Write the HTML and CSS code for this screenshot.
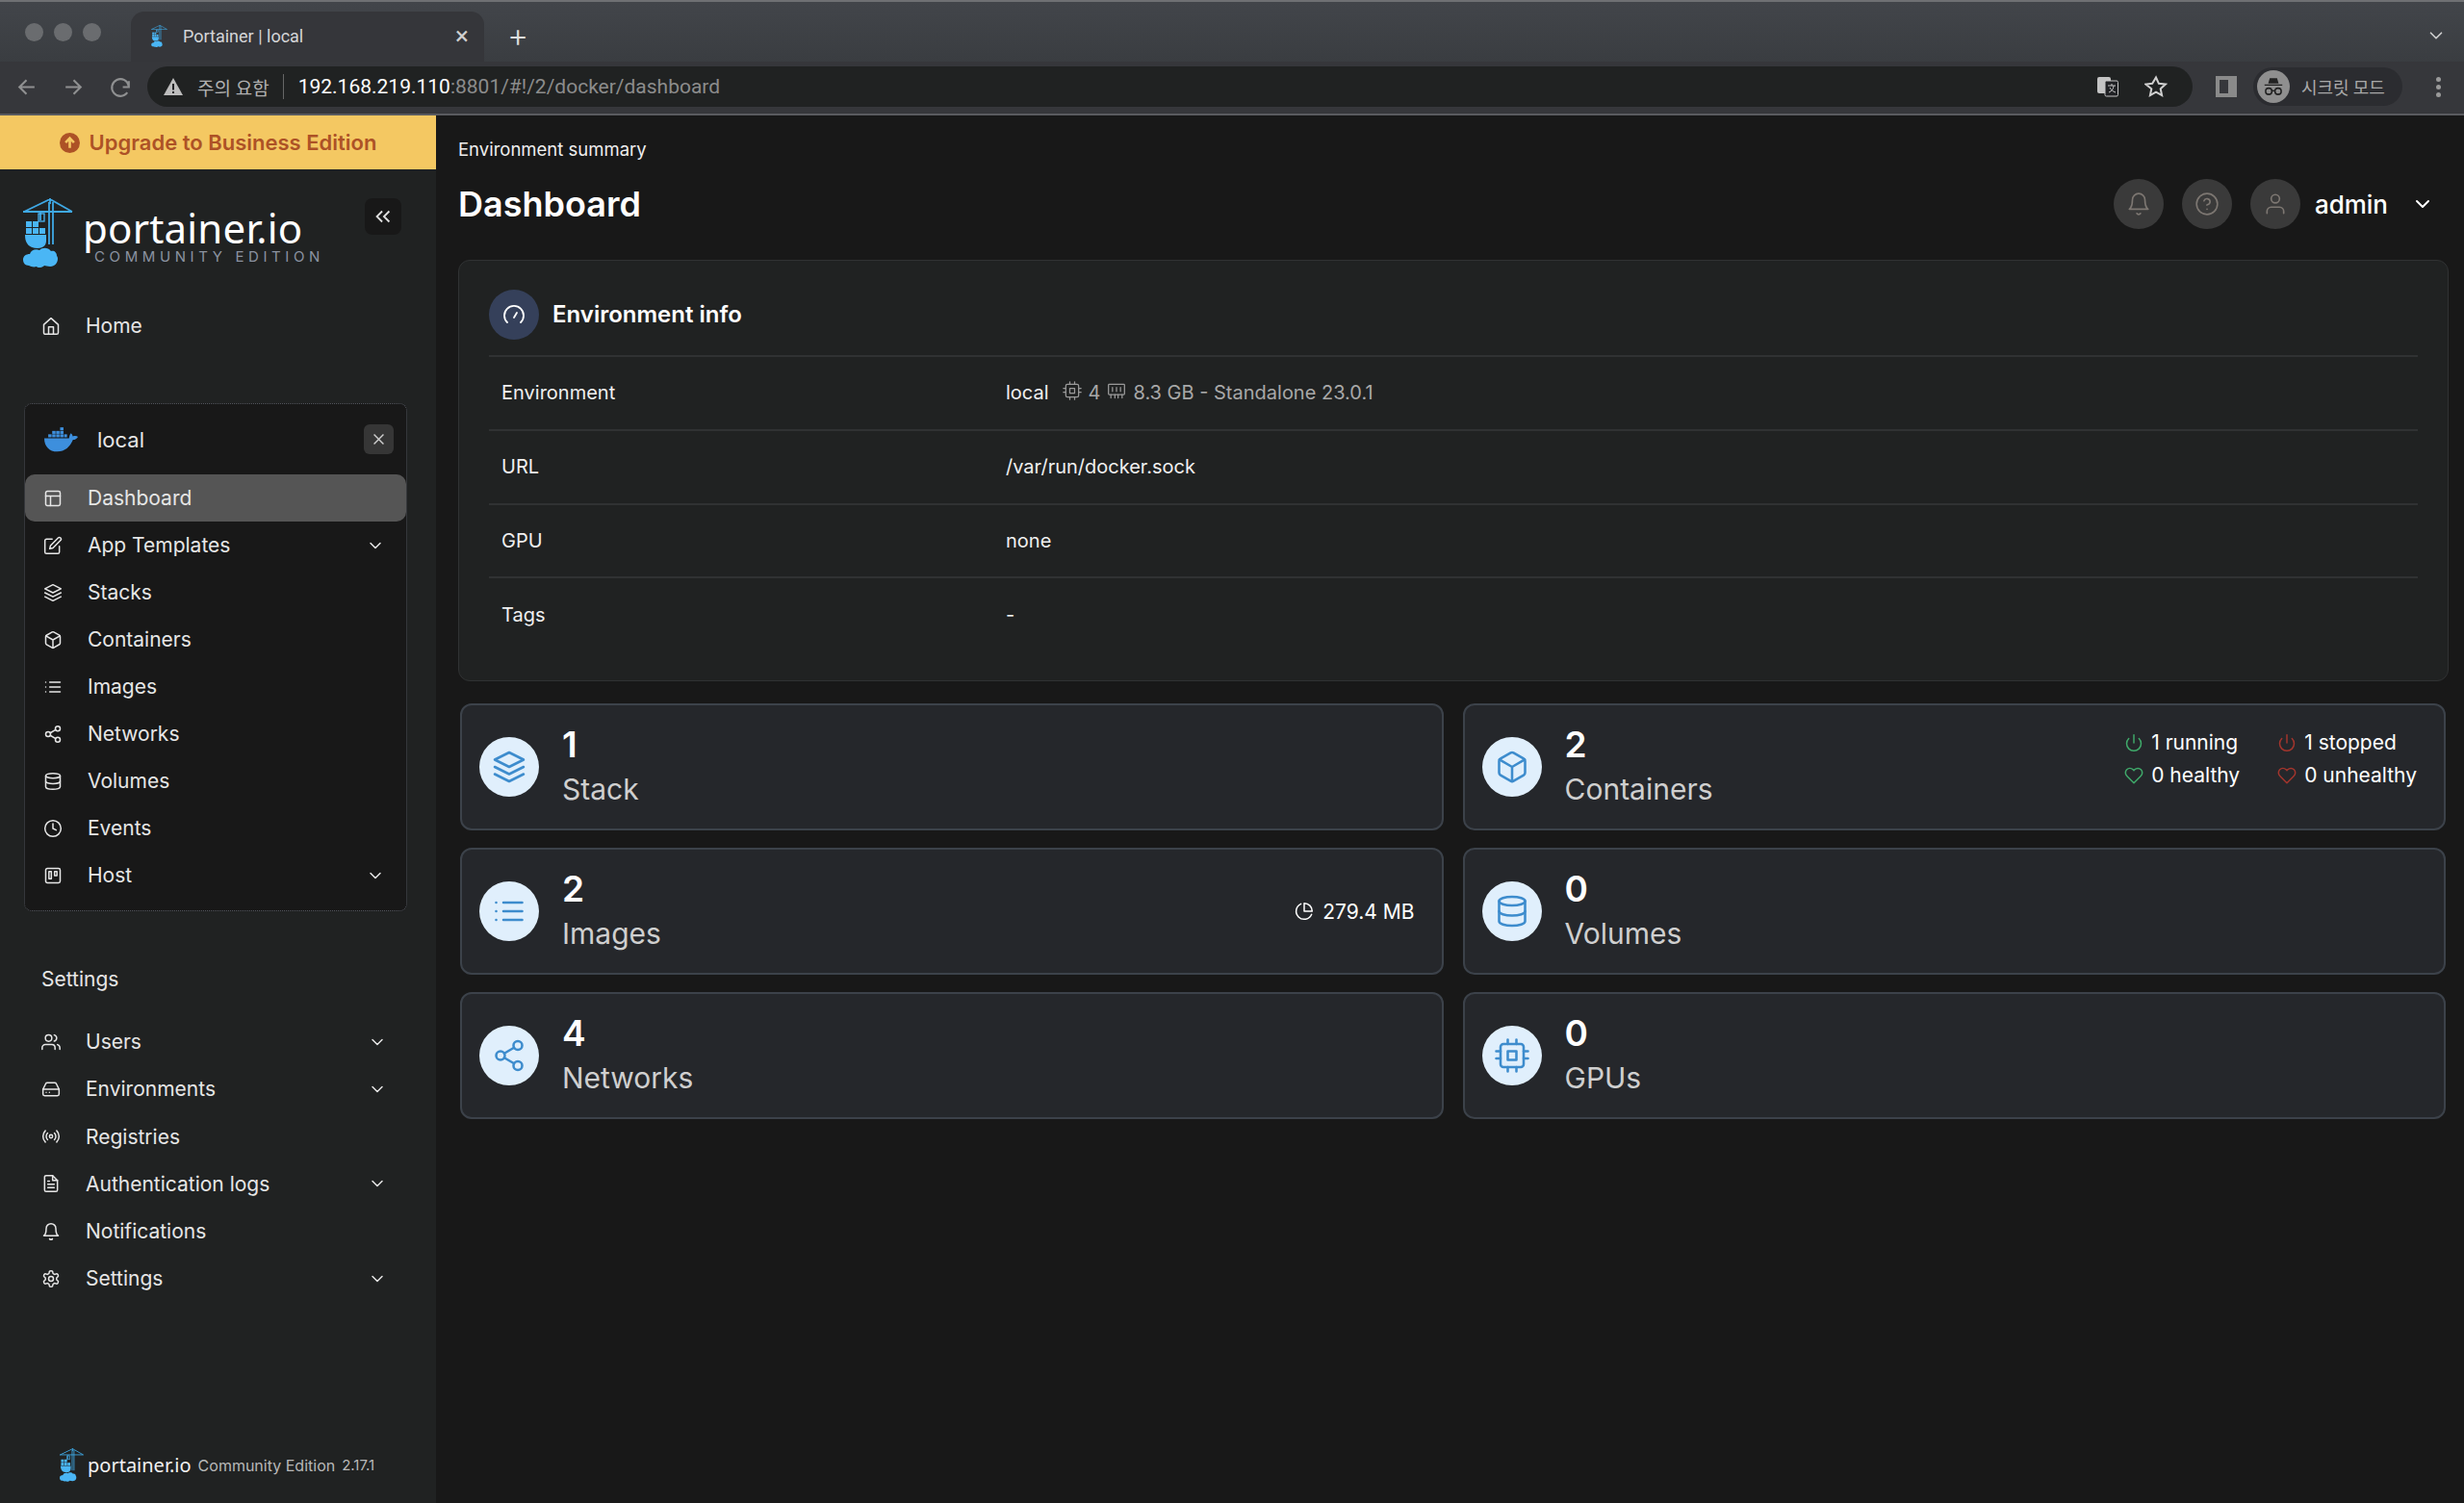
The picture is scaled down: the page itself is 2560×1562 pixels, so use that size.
FILE: index.html
```html
<!DOCTYPE html>
<html lang="en">
<head>
<meta charset="utf-8">
<title>Portainer | local</title>
<link rel="stylesheet" href="styles.css">
</head>
<body>
<svg class="defs" width="0" height="0" aria-hidden="true">
  <symbol id="i-home" viewBox="0 0 24 24"><path d="M3 10l9-8 9 8v10a2 2 0 0 1-2 2H5a2 2 0 0 1-2-2z"/><path d="M9 22V13h6v9"/></symbol>
  <symbol id="i-layout" viewBox="0 0 24 24"><rect x="3" y="3" width="18" height="18" rx="2"/><path d="M3 9h18M9 21V9"/></symbol>
  <symbol id="i-edit" viewBox="0 0 24 24"><path d="M11 4H4a2 2 0 0 0-2 2v14a2 2 0 0 0 2 2h14a2 2 0 0 0 2-2v-7"/><path d="M18.5 2.5a2.121 2.121 0 0 1 3 3L12 15l-4 1 1-4 9.5-9.5z"/></symbol>
  <symbol id="i-layers" viewBox="0 0 24 24"><path d="M12 2 2 7l10 5 10-5-10-5z"/><path d="M2 17l10 5 10-5"/><path d="M2 12l10 5 10-5"/></symbol>
  <symbol id="i-box" viewBox="0 0 24 24"><path d="M21 16V8a2 2 0 0 0-1-1.73l-7-4a2 2 0 0 0-2 0l-7 4A2 2 0 0 0 3 8v8a2 2 0 0 0 1 1.73l7 4a2 2 0 0 0 2 0l7-4A2 2 0 0 0 21 16z"/><path d="M3.27 6.96 12 12.01l8.73-5.05M12 22.08V12"/></symbol>
  <symbol id="i-list" viewBox="0 0 24 24"><path d="M8 6h13M8 12h13M8 18h13M3 6h.01M3 12h.01M3 18h.01"/></symbol>
  <symbol id="i-share" viewBox="0 0 24 24"><circle cx="18" cy="5" r="3"/><circle cx="6" cy="12" r="3"/><circle cx="18" cy="19" r="3"/><path d="M8.59 13.51l6.83 3.98M15.41 6.51l-6.82 3.98"/></symbol>
  <symbol id="i-db" viewBox="0 0 24 24"><ellipse cx="12" cy="5" rx="9" ry="3"/><path d="M21 12c0 1.66-4 3-9 3s-9-1.34-9-3"/><path d="M3 5v14c0 1.66 4 3 9 3s9-1.34 9-3V5"/></symbol>
  <symbol id="i-clock" viewBox="0 0 24 24"><circle cx="12" cy="12" r="10"/><path d="M12 6v6l4 2"/></symbol>
  <symbol id="i-host" viewBox="0 0 24 24"><rect x="3" y="3" width="18" height="18" rx="2"/><rect x="7" y="7" width="3" height="9"/><rect x="14" y="7" width="3" height="5"/></symbol>
  <symbol id="i-chev" viewBox="0 0 24 24"><path d="M6 9l6 6 6-6"/></symbol>
  <symbol id="i-users" viewBox="0 0 24 24"><path d="M17 21v-2a4 4 0 0 0-4-4H5a4 4 0 0 0-4 4v2"/><circle cx="9" cy="7" r="4"/><path d="M23 21v-2a4 4 0 0 0-3-3.87"/><path d="M16 3.13a4 4 0 0 1 0 7.75"/></symbol>
  <symbol id="i-drive" viewBox="0 0 24 24"><path d="M22 12H2"/><path d="M5.45 5.11 2 12v6a2 2 0 0 0 2 2h16a2 2 0 0 0 2-2v-6l-3.45-6.89A2 2 0 0 0 16.76 4H7.24a2 2 0 0 0-1.79 1.11z"/><path d="M6 16h.01M10 16h.01"/></symbol>
  <symbol id="i-radio" viewBox="0 0 24 24"><circle cx="12" cy="12" r="2"/><path d="M16.24 7.76a6 6 0 0 1 0 8.49m-8.48-.01a6 6 0 0 1 0-8.49m11.31-2.82a10 10 0 0 1 0 14.14m-14.14 0a10 10 0 0 1 0-14.14"/></symbol>
  <symbol id="i-file" viewBox="0 0 24 24"><path d="M14 2H6a2 2 0 0 0-2 2v16a2 2 0 0 0 2 2h12a2 2 0 0 0 2-2V8z"/><path d="M14 2v6h6M16 13H8M16 17H8M10 9H8"/></symbol>
  <symbol id="i-bell" viewBox="0 0 24 24"><path d="M18 8A6 6 0 0 0 6 8c0 7-3 9-3 9h18s-3-2-3-9"/><path d="M13.73 21a2 2 0 0 1-3.46 0"/></symbol>
  <symbol id="i-gear" viewBox="0 0 24 24"><path d="M12.22 2h-.44a2 2 0 0 0-2 2v.18a2 2 0 0 1-1 1.73l-.43.25a2 2 0 0 1-2 0l-.15-.08a2 2 0 0 0-2.73.73l-.22.38a2 2 0 0 0 .73 2.73l.15.1a2 2 0 0 1 1 1.72v.51a2 2 0 0 1-1 1.74l-.15.09a2 2 0 0 0-.73 2.73l.22.38a2 2 0 0 0 2.73.73l.15-.08a2 2 0 0 1 2 0l.43.25a2 2 0 0 1 1 1.73V20a2 2 0 0 0 2 2h.44a2 2 0 0 0 2-2v-.18a2 2 0 0 1 1-1.73l.43-.25a2 2 0 0 1 2 0l.15.08a2 2 0 0 0 2.73-.73l.22-.39a2 2 0 0 0-.73-2.73l-.15-.08a2 2 0 0 1-1-1.74v-.5a2 2 0 0 1 1-1.74l.15-.09a2 2 0 0 0 .73-2.73l-.22-.38a2 2 0 0 0-2.73-.73l-.15.08a2 2 0 0 1-2 0l-.43-.25a2 2 0 0 1-1-1.73V4a2 2 0 0 0-2-2z"/><circle cx="12" cy="12" r="3"/></symbol>
  <symbol id="i-cpu" viewBox="0 0 24 24"><rect x="4" y="4" width="16" height="16" rx="2"/><rect x="9" y="9" width="6" height="6"/><path d="M9 1v3M15 1v3M9 20v3M15 20v3M20 9h3M20 14h3M1 9h3M1 14h3"/></symbol>
  <symbol id="i-mem" viewBox="0 0 24 24"><path d="M3 4h18a1 1 0 0 1 1 1v11a1 1 0 0 1-1 1H3a1 1 0 0 1-1-1V5a1 1 0 0 1 1-1z"/><path d="M7 8v5M12 8v5M17 8v5M5 17v4M10 17v4M14 17v4M19 17v4"/></symbol>
  <symbol id="i-power" viewBox="0 0 24 24"><path d="M18.36 6.64a9 9 0 1 1-12.73 0"/><path d="M12 2v10"/></symbol>
  <symbol id="i-heart" viewBox="0 0 24 24"><path d="M20.84 4.61a5.5 5.5 0 0 0-7.78 0L12 5.67l-1.06-1.06a5.5 5.5 0 0 0-7.78 7.78l1.06 1.06L12 21.23l7.78-7.78 1.06-1.06a5.5 5.5 0 0 0 0-7.78z"/></symbol>
  <symbol id="i-pie" viewBox="0 0 24 24"><path d="M21.21 15.89A10 10 0 1 1 8 2.83"/><path d="M22 12A10 10 0 0 0 12 2v10z"/></symbol>
  <symbol id="i-help" viewBox="0 0 24 24"><circle cx="12" cy="12" r="10"/><path d="M9.09 9a3 3 0 0 1 5.83 1c0 2-3 3-3 3M12 17h.01"/></symbol>
  <symbol id="i-user" viewBox="0 0 24 24"><path d="M20 21v-2a4 4 0 0 0-4-4H8a4 4 0 0 0-4 4v2"/><circle cx="12" cy="7" r="4"/></symbol>
  <symbol id="i-gauge" viewBox="0 0 24 24"><path d="M5 20a10 10 0 1 1 14 0"/><path d="M12 15l3-5"/></symbol>
  <symbol id="i-up" viewBox="0 0 24 24"><circle cx="12" cy="12" r="12" fill="#ad5226" stroke="none"/><path d="M12 18V7M7 11.5 12 6.5l5 5" stroke="#f4c862" fill="none" stroke-width="3"/></symbol>
  <symbol id="logo" viewBox="0 0 52 72">
    <g fill="none" stroke="#3fa9e6" stroke-width="1.8"><path d="M0 14h51M1 14 28 1l23 13M28 0v6"/><path d="M27 4v44M31 4v44"/><path d="M18 15v8"/></g>
    <rect x="16" y="16" width="6" height="8" fill="none" stroke="#4ab6f5" stroke-width="1.3"/>
    <g fill="#4ab6f5"><rect x="3" y="24" width="6" height="6"/><rect x="10" y="24" width="6" height="6"/><rect x="3" y="31" width="6" height="6"/><rect x="10" y="31" width="6" height="6"/><rect x="17" y="31" width="6" height="6"/>
    <path d="M2 38h22v6c0 6-4 8-9 8-8 0-13-4-13-14z"/>
    <path d="M6 70c-4 0-6-3-6-6 0-4 3-6 7-6 1-4 6-6 10-4 3-3 9-3 12 1 3-1 6 1 6 5 2 2 1 8-3 10-4 2-8 0-10 0-2 2-6 3-8 1-3 1-6 0-8-1z"/></g>
  </symbol>
  <symbol id="whale" viewBox="0 0 34 25">
    <g fill="#3d8fdd"><rect x="4" y="7" width="3.4" height="3"/><rect x="8" y="7" width="3.4" height="3"/><rect x="12" y="7" width="3.4" height="3"/><rect x="16" y="7" width="3.4" height="3"/><rect x="8" y="3.6" width="3.4" height="3"/><rect x="12" y="3.6" width="3.4" height="3"/><rect x="16" y="3.6" width="3.4" height="3"/><rect x="16" y="0" width="3.4" height="3"/><rect x="20" y="7" width="3" height="3"/>
    <path d="M0 11h25c.5-3 1-4 2-5 1 1 1.600 2 1.800 3 2-.5 4-.5 5.200.5-1 2-3 3-5 3-3 7-8 12-16 12C5 24.500 0 19 0 11z"/></g>
  </symbol>
</svg>

<header class="tabstrip">
  <div class="dots"><span class="dot"></span><span class="dot"></span><span class="dot"></span></div>
  <div class="tab">
    <svg class="favicon"><use href="#logo"/></svg>
    <span class="tab-title">Portainer | local</span>
    <span class="tab-x">×</span>
  </div>
  <span class="newtab">+</span>
  <svg class="ic tab-more"><use href="#i-chev"/></svg>
</header>

<div class="toolbar">
  <svg class="nav-ic" viewBox="0 0 24 24"><path d="M20 12H5M12 5l-7 7 7 7"/></svg>
  <svg class="nav-ic" viewBox="0 0 24 24"><path d="M4 12h15M12 5l7 7-7 7"/></svg>
  <svg class="nav-ic" viewBox="0 0 24 24"><path d="M20 6v6h-6M20 11a8.500 8.500 0 1 0-1.500 6.500"/></svg>
  <div class="omnibox">
    <svg class="warn" viewBox="0 0 20 18"><path d="M10 0l10 18H0z" fill="#bdbdbd"/><rect x="9" y="6" width="2" height="6.500" fill="#202124"/><rect x="9" y="14" width="2" height="2" fill="#202124"/></svg>
    <span class="warn-text">주의 요함</span>
    <span class="omni-div"></span>
    <span class="url"><b class="url-host">192.168.219.110</b>:8801/#!/2/docker/dashboard</span>
    <svg class="translate" viewBox="0 0 22 22"><rect x="0" y="1" width="14" height="17" rx="2" fill="#c4c4c4"/><rect x="8" y="5" width="13.500" height="16" rx="1.500" fill="#202124" stroke="#c4c4c4" stroke-width="1"/><path d="M11 10h8M15 8v2M12 17c3-1 5-4 5-7M13 12c1 2 3 4 6 5" stroke="#c4c4c4" fill="none"/></svg>
    <svg class="star" viewBox="0 0 24 24"><path d="M12 2.500l2.900 6.300 6.900.8-5.100 4.700 1.400 6.800-6.100-3.400-6.100 3.400 1.400-6.800L1.300 9.600l6.900-.8z"/></svg>
  </div>
  <span class="panel-ic"></span>
  <div class="incog">
    <span class="incog-face"><svg viewBox="0 0 24 24"><path d="M7 9l1.500-5h7L17 9zM3.500 10h17v1h-17z" fill="#222"/><circle cx="7.500" cy="16.500" r="3" fill="none" stroke="#222" stroke-width="1.400"/><circle cx="16.500" cy="16.500" r="3" fill="none" stroke="#222" stroke-width="1.400"/><path d="M10.500 16h3" stroke="#222" stroke-width="1.400"/></svg></span>
    <span class="incog-text">시크릿 모드</span>
  </div>
  <span class="kebab"><i></i><i></i><i></i></span>
</div>

<div class="app">
  <aside class="sidebar">
    <div class="upgrade"><svg class="up-ic"><use href="#i-up"/></svg><span>Upgrade to Business Edition</span></div>
    <div class="brand">
      <svg class="brand-logo"><use href="#logo"/></svg>
      <div class="brand-text"><div class="brand-name">portainer.io</div><div class="brand-sub">COMMUNITY EDITION</div></div>
      <button class="collapse"><svg viewBox="0 0 24 24"><path d="M11 6l-6 6 6 6M19 6l-6 6 6 6"/></svg></button>
    </div>
    <a class="item home"><svg class="ic"><use href="#i-home"/></svg><span>Home</span></a>

    <section class="envbox">
      <div class="envhead">
        <svg class="whale"><use href="#whale"/></svg>
        <span class="envname">local</span>
        <button class="envclose"><svg viewBox="0 0 24 24"><path d="M5 5l14 14M19 5 5 19"/></svg></button>
      </div>
      <a class="item boxed active"><svg class="ic"><use href="#i-layout"/></svg><span>Dashboard</span></a>
      <a class="item boxed"><svg class="ic"><use href="#i-edit"/></svg><span>App Templates</span><svg class="ic chev"><use href="#i-chev"/></svg></a>
      <a class="item boxed"><svg class="ic"><use href="#i-layers"/></svg><span>Stacks</span></a>
      <a class="item boxed"><svg class="ic"><use href="#i-box"/></svg><span>Containers</span></a>
      <a class="item boxed"><svg class="ic"><use href="#i-list"/></svg><span>Images</span></a>
      <a class="item boxed"><svg class="ic"><use href="#i-share"/></svg><span>Networks</span></a>
      <a class="item boxed"><svg class="ic"><use href="#i-db"/></svg><span>Volumes</span></a>
      <a class="item boxed"><svg class="ic"><use href="#i-clock"/></svg><span>Events</span></a>
      <a class="item boxed"><svg class="ic"><use href="#i-host"/></svg><span>Host</span><svg class="ic chev"><use href="#i-chev"/></svg></a>
    </section>

    <div class="side-heading">Settings</div>
    <a class="item"><svg class="ic"><use href="#i-users"/></svg><span>Users</span><svg class="ic chev"><use href="#i-chev"/></svg></a>
    <a class="item"><svg class="ic"><use href="#i-drive"/></svg><span>Environments</span><svg class="ic chev"><use href="#i-chev"/></svg></a>
    <a class="item"><svg class="ic"><use href="#i-radio"/></svg><span>Registries</span></a>
    <a class="item"><svg class="ic"><use href="#i-file"/></svg><span>Authentication logs</span><svg class="ic chev"><use href="#i-chev"/></svg></a>
    <a class="item"><svg class="ic"><use href="#i-bell"/></svg><span>Notifications</span></a>
    <a class="item"><svg class="ic"><use href="#i-gear"/></svg><span>Settings</span><svg class="ic chev"><use href="#i-chev"/></svg></a>

    <footer class="side-foot">
      <svg class="foot-logo"><use href="#logo"/></svg>
      <span class="foot-name">portainer.io</span>
      <span class="foot-ce">Community Edition</span>
      <span class="foot-ver">2.17.1</span>
    </footer>
  </aside>

  <main class="main">
    <div class="crumb">Environment summary</div>
    <div class="titlebar">
      <h1 class="title">Dashboard</h1>
      <div class="usermenu">
        <span class="round"><svg class="ic"><use href="#i-bell"/></svg></span>
        <span class="round"><svg class="ic"><use href="#i-help"/></svg></span>
        <span class="round"><svg class="ic"><use href="#i-user"/></svg></span>
        <span class="username">admin</span>
        <svg class="ic user-chev"><use href="#i-chev"/></svg>
      </div>
    </div>

    <section class="infocard">
      <div class="infohead">
        <span class="infoicon"><svg class="ic"><use href="#i-gauge"/></svg></span>
        <h2 class="infotitle">Environment info</h2>
      </div>
      <div class="inforow"><span class="k">Environment</span><span class="v">local<span class="meta"><svg class="ic"><use href="#i-cpu"/></svg><span>4</span><svg class="ic"><use href="#i-mem"/></svg><span>8.3 GB - Standalone 23.0.1</span></span></span></div>
      <div class="inforow"><span class="k">URL</span><span class="v">/var/run/docker.sock</span></div>
      <div class="inforow"><span class="k">GPU</span><span class="v">none</span></div>
      <div class="inforow"><span class="k">Tags</span><span class="v">-</span></div>
    </section>

    <section class="stats">
      <article class="stat">
        <span class="stat-ic"><svg class="ic"><use href="#i-layers"/></svg></span>
        <div class="stat-text"><div class="num">1</div><div class="lbl">Stack</div></div>
      </article>
      <article class="stat">
        <span class="stat-ic"><svg class="ic"><use href="#i-box"/></svg></span>
        <div class="stat-text"><div class="num">2</div><div class="lbl">Containers</div></div>
        <div class="statusgrid">
          <span class="st"><svg class="ic ok"><use href="#i-power"/></svg>1 running</span>
          <span class="st"><svg class="ic bad"><use href="#i-power"/></svg>1 stopped</span>
          <span class="st"><svg class="ic ok"><use href="#i-heart"/></svg>0 healthy</span>
          <span class="st"><svg class="ic bad"><use href="#i-heart"/></svg>0 unhealthy</span>
        </div>
      </article>
      <article class="stat">
        <span class="stat-ic"><svg class="ic"><use href="#i-list"/></svg></span>
        <div class="stat-text"><div class="num">2</div><div class="lbl">Images</div></div>
        <span class="size"><svg class="ic"><use href="#i-pie"/></svg>279.4 MB</span>
      </article>
      <article class="stat">
        <span class="stat-ic"><svg class="ic"><use href="#i-db"/></svg></span>
        <div class="stat-text"><div class="num">0</div><div class="lbl">Volumes</div></div>
      </article>
      <article class="stat">
        <span class="stat-ic"><svg class="ic"><use href="#i-share"/></svg></span>
        <div class="stat-text"><div class="num">4</div><div class="lbl">Networks</div></div>
      </article>
      <article class="stat">
        <span class="stat-ic"><svg class="ic"><use href="#i-cpu"/></svg></span>
        <div class="stat-text"><div class="num">0</div><div class="lbl">GPUs</div></div>
      </article>
    </section>
  </main>
</div>
</body>
</html>
```
FILE: styles.css
```css
* { box-sizing: border-box; }
html, body { margin: 0; padding: 0; }
body {
  width: 2560px;
  height: 1562px;
  overflow: hidden;
  display: flex;
  flex-direction: column;
  background: #181818;
  color: #fff;
  font-family: Inter, "Noto Sans CJK KR", sans-serif;
}
.defs { position: absolute; }
.ic {
  width: 20px;
  height: 20px;
  flex: none;
  fill: none;
  stroke: currentColor;
  stroke-width: 1.8;
  stroke-linecap: round;
  stroke-linejoin: round;
}
button { border: 0; padding: 0; display: flex; align-items: center; justify-content: center; }

/* browser chrome */
.tabstrip {
  height: 64px;
  flex: none;
  display: flex;
  align-items: flex-end;
  padding-left: 26px;
  background: linear-gradient(#42454a, #3a3d41);
  border-top: 2px solid #6f7073;
}
.dots { display: flex; gap: 11px; align-self: flex-start; margin-top: 22px; }
.dot { width: 19px; height: 19px; border-radius: 50%; background: #6a6c6f; }
.tab {
  width: 367px;
  height: 52px;
  margin-left: 31px;
  display: flex;
  align-items: center;
  padding: 0 16px 2px 21px;
  background: #35363a;
  border-radius: 14px 14px 0 0;
  font-size: 18px;
  font-family: Roboto, sans-serif;
  color: #d4d5d7;
}
.favicon { width: 17px; height: 23px; }
.tab-title { margin-left: 16px; flex: 1; }
.tab-x { font-size: 26px; color: #d0d0d0; line-height: 1; }
.newtab { margin: 0 0 5px 24px; font-size: 34px; line-height: 44px; color: #dedede; font-weight: 300; }
.tab-more { margin: 0 18px 16px auto; width: 22px; height: 22px; color: #d0d0d0; }

.toolbar {
  height: 56px;
  flex: none;
  display: flex;
  align-items: center;
  padding: 0 17px 2px 15px;
  background: #36373b;
  border-bottom: 2px solid #5a5b5f;
}
.nav-ic { width: 25px; height: 25px; margin-right: 24px; fill: none; stroke: #8f9091; stroke-width: 2; flex: none; }
.omnibox {
  width: 2125px;
  height: 42px;
  margin-left: -9px;
  display: flex;
  align-items: center;
  padding: 0 26px 0 16px;
  background: #202222;
  border-radius: 21px;
  font-family: Roboto, "Noto Sans CJK KR", sans-serif;
  font-size: 21px;
}
.warn { width: 20px; height: 18px; margin-left: 1px; }
.warn-text { margin-left: 15px; color: #b0b0b0; font-size: 19px; }
.omni-div { width: 1px; height: 26px; margin: 0 15px 0 14px; background: #666; }
.url { color: #8c8c8c; flex: 1; }
.url-host { color: #fff; font-weight: 400; }
.translate { width: 22px; height: 22px; margin-right: 27px; }
.star { width: 24px; height: 24px; fill: none; stroke: #d0d0d0; stroke-width: 2; }
.panel-ic { width: 22px; height: 22px; margin-left: 24px; background: #8a8a8a; border: 4px solid #8a8a8a; border-right-width: 9px; box-shadow: inset 0 0 0 11px #36373b; }
.incog {
  width: 155px;
  height: 40px;
  margin-left: 17px;
  display: flex;
  align-items: center;
  padding-left: 4px;
  border-radius: 20px;
  background: #2b2c30;
  font-family: "Noto Sans CJK KR", sans-serif;
  font-size: 18px;
  color: #a9a9a9;
}
.incog-face { width: 34px; height: 34px; border-radius: 50%; background: #8f8f8f; display: flex; align-items: center; justify-content: center; }
.incog-face svg { width: 26px; height: 26px; }
.incog-text { margin-left: 12px; }
.kebab { margin-left: auto; margin-right: 7px; display: flex; flex-direction: column; gap: 3px; }
.kebab i { width: 5px; height: 5px; border-radius: 50%; background: #9a9a9a; }

/* app */
.app { flex: 1; display: flex; min-height: 0; }
.sidebar {
  width: 453px;
  flex: none;
  display: flex;
  flex-direction: column;
  background: #202222;
  font-size: 21px;
  color: #e6e6e6;
}
.upgrade {
  height: 56px;
  flex: none;
  display: flex;
  align-items: center;
  justify-content: center;
  gap: 10px;
  background: #f4c862;
  color: #ad5226;
  font-size: 22px;
  font-weight: 600;
}
.up-ic { width: 21px; height: 21px; }
.brand { height: 102px; flex: none; display: flex; align-items: flex-start; padding: 30px 36px 0 24px; }
.brand-logo { width: 52px; height: 72px; flex: none; }
.brand-text { margin-left: 10px; }
.brand-name { font-family: "Noto Sans", sans-serif; font-size: 42px; line-height: 46px; margin-top: 8px; color: #fff; letter-spacing: .2px; }
.brand-sub { font-size: 15px; line-height: 18px; margin: -2px 0 0 12px; letter-spacing: 4.6px; color: #8b93a1; white-space: nowrap; }
.collapse { margin-left: auto; width: 38px; height: 38px; border-radius: 8px; background: #181818; }
.collapse svg { width: 22px; height: 22px; fill: none; stroke: #e0e0e0; stroke-width: 2; }

.item {
  height: 49.2px;
  flex: none;
  display: flex;
  align-items: center;
  gap: 26px;
  padding: 0 51px 0 43px;
  color: #e6e6e6;
}
.item .chev { margin-left: auto; }
.home { margin-top: 36px; }
.envbox {
  width: 398px;
  margin: 56px 0 0 25px;
  padding-bottom: 12px;
  flex: none;
  background: #181818;
  border: 1px dotted #53565e;
  border-radius: 8px;
}
.envhead { height: 73px; display: flex; align-items: center; padding: 0 13px 0 20px; }
.whale { width: 35px; height: 26px; flex: none; }
.envname { margin-left: 20px; flex: 1; font-size: 22px; }
.envclose { width: 31px; height: 31px; border-radius: 6px; background: #363636; }
.envclose svg { width: 17px; height: 17px; fill: none; stroke: #cfcfcf; stroke-width: 2; }
.boxed { height: 49px; padding: 0 22px 0 19px; border-radius: 10px; }
.active { background: #555; }
.side-heading { margin: 56px 0 25px 43px; height: 30px; line-height: 30px; color: #e6e6e6; }
.side-foot {
  margin-top: auto;
  padding: 0 0 22px 62px;
  display: flex;
  align-items: center;
}
.foot-logo { width: 25px; height: 35px; flex: none; }
.foot-name { margin-left: 4px; font-family: "Noto Sans", sans-serif; font-size: 20px; color: #f2f2f2; }
.foot-ce { margin-left: 7px; font-size: 16px; color: #b8b8b8; }
.foot-ver { margin-left: 7px; font-size: 15px; color: #b8b8b8; }

/* main */
.main { flex: 1; min-width: 0; padding: 23px 16px 0 23px; }
.crumb { height: 24px; line-height: 24px; font-size: 18.5px; color: #eee; }
.titlebar { height: 52px; margin-top: 19px; display: flex; align-items: center; justify-content: space-between; }
.title { margin: 0; font-size: 36px; font-weight: 600; }
.usermenu { display: flex; align-items: center; margin-right: 0; }
.round { width: 52px; height: 52px; margin-right: 19px; border-radius: 50%; background: #3a3a3a; color: #7d7772; display: flex; align-items: center; justify-content: center; }
.round .ic { width: 26px; height: 26px; stroke-width: 1.500; }
.username { margin-left: -4px; font-size: 26px; font-weight: 500; }
.user-chev { width: 24px; height: 24px; margin: 0 15px 0 24px; stroke-width: 2; }

.infocard {
  height: 438px;
  margin-top: 32px;
  padding: 0 31px;
  background: #202222;
  border: 1px solid #303233;
  border-radius: 12px;
  font-size: 20px;
}
.infohead { height: 98px; padding-top: 30px; display: flex; align-items: flex-start; gap: 14px; }
.infoicon { width: 52px; height: 52px; border-radius: 50%; background: #35405a; display: flex; align-items: center; justify-content: center; }
.infoicon .ic { width: 24px; height: 24px; }
.infotitle { margin: 0; font-size: 24px; line-height: 52px; font-weight: 600; }
.inforow { height: 76.8px; display: flex; align-items: center; padding-left: 13px; border-top: 2px solid #303233; color: #f0f0f0; }
.k { width: 524px; flex: none; }
.v { display: flex; align-items: center; }
.meta { margin-left: 14px; display: flex; align-items: center; gap: 7px; color: #a8a8a8; }
.meta .ic { margin-top: -5px; color: #9a9a9a; stroke-width: 1.500; }
.meta span + .ic { margin-left: 0; }

.stats {
  margin: 23px 3px 0 2px;
  display: grid;
  grid-template-columns: 1fr 1fr;
  grid-auto-rows: 132px;
  gap: 18px 20px;
}
.stat {
  display: flex;
  align-items: center;
  padding: 0 28px 0 18px;
  background: #25272b;
  border: 2px solid #3c424a;
  border-radius: 12px;
}
.stat-ic { width: 62px; height: 62px; flex: none; border-radius: 50%; background: #e0effc; color: #3d8ccd; display: flex; align-items: center; justify-content: center; }
.stat-ic .ic { width: 36px; height: 36px; stroke-width: 1.700; }
.stat-text { margin-left: 24px; }
.num { font-size: 37px; line-height: 46px; font-weight: 600; }
.lbl { font-size: 30px; line-height: 46px; color: #cfcfcf; }
.statusgrid {
  margin-left: auto;
  margin-top: -16px;
  display: grid;
  grid-template-columns: 159px auto;
  row-gap: 8px;
  font-size: 21px;
  font-weight: 400;
}
.st { display: flex; align-items: center; gap: 8px; line-height: 26px; white-space: nowrap; }
.st .ic { width: 20px; height: 20px; }
.ok { color: #3fa96a; }
.bad { color: #a3352d; }
.size { margin-left: auto; display: flex; align-items: center; gap: 9px; font-size: 21px; }
```
